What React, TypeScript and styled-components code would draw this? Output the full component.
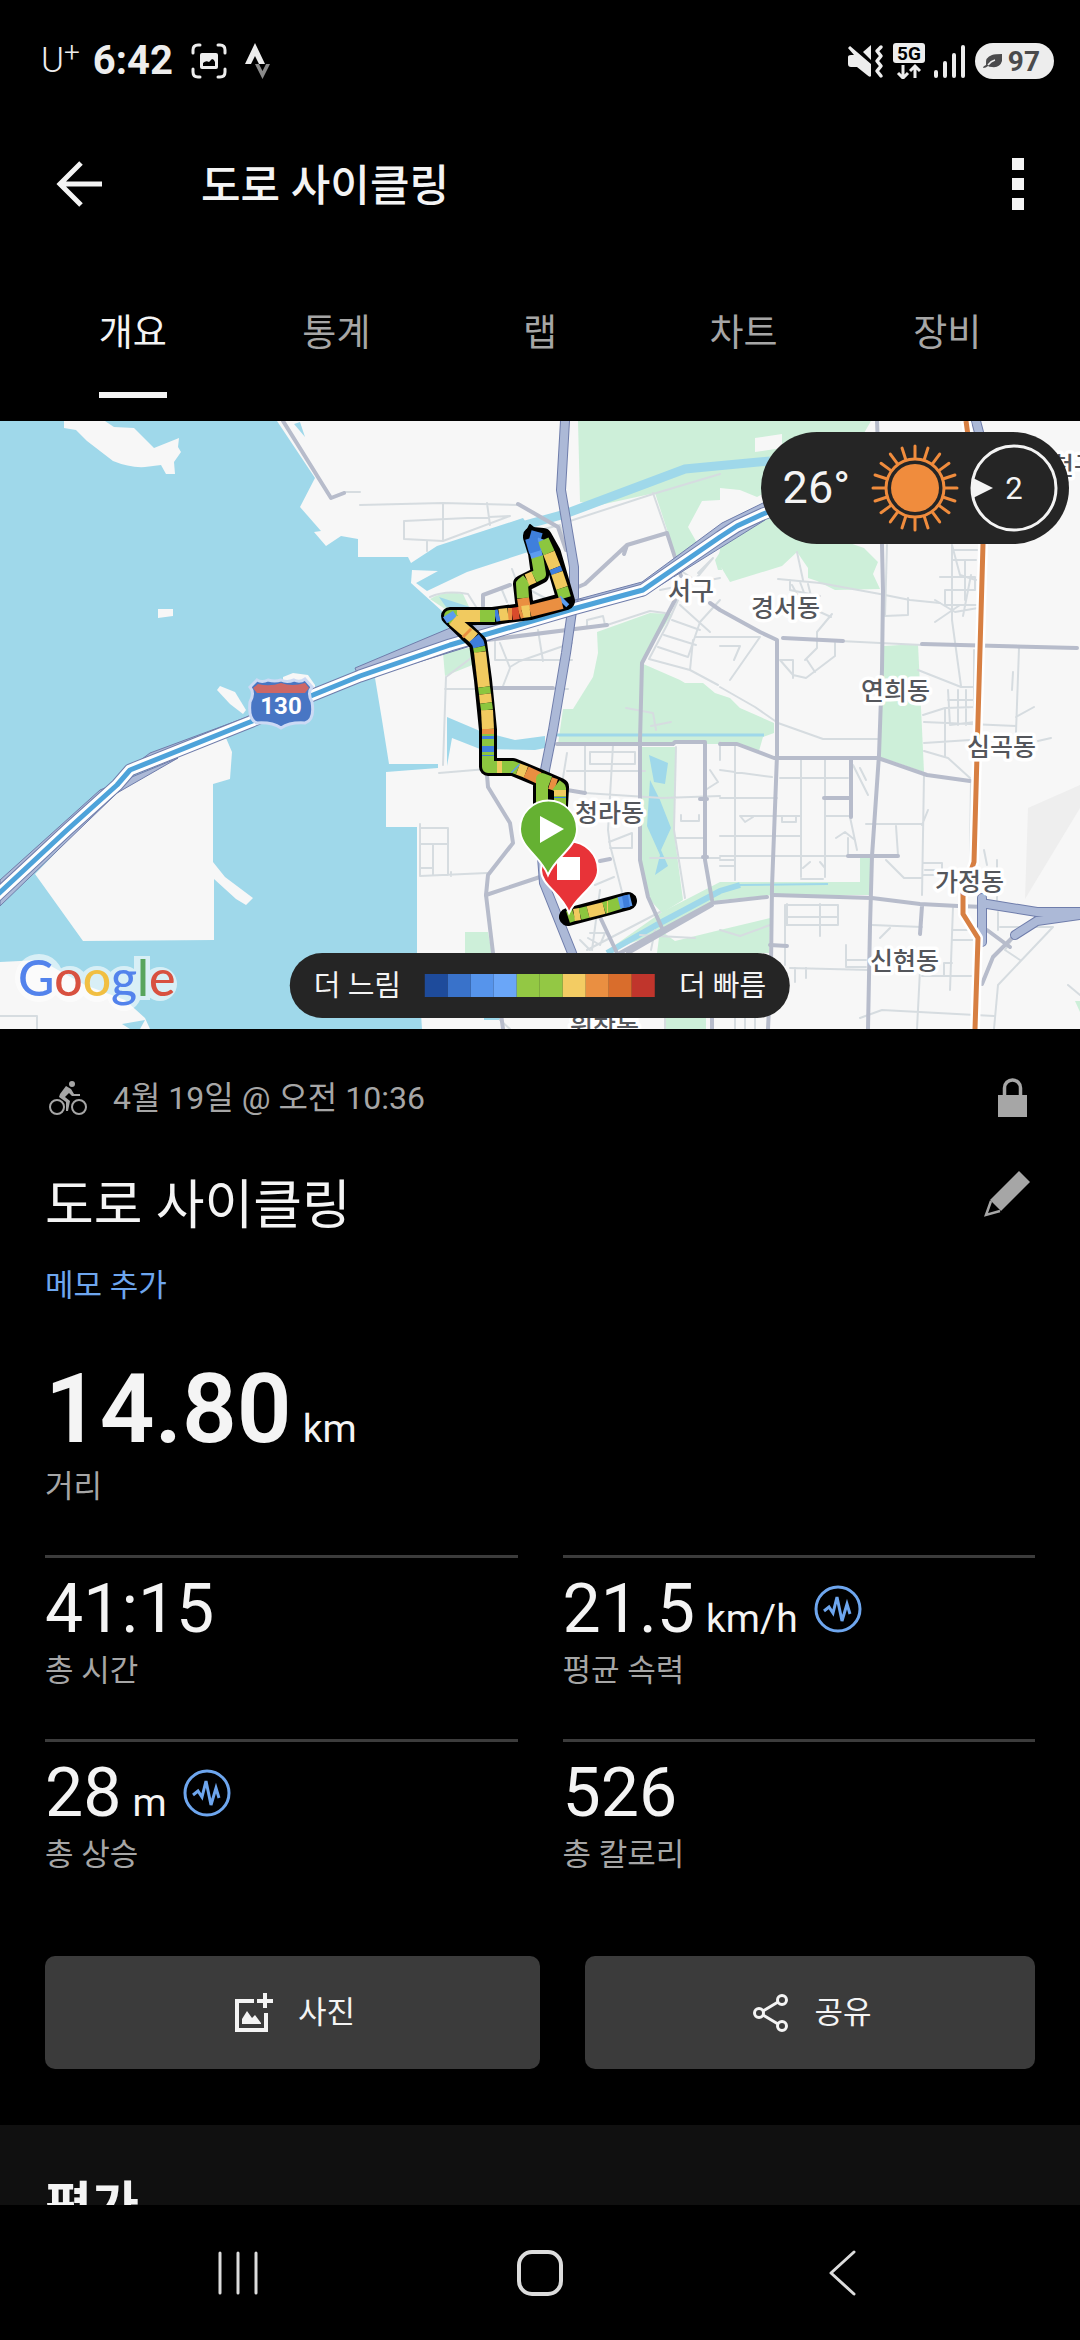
import * as React from "react";
import styled, { createGlobalStyle } from "styled-components";

const colour = {
  black: "#000000",
  panel: "#101010",
  overlay: "#252525",
  button: "#3b3b3b",
  divider: "#3c3c3c",
  text: "#f4f4f4",
  muted: "#a6a6a6",
  link: "#6ea6ee",
  land: "#f7f7f7",
  water: "#9fd8ea",
  park: "#cdefd9",
  minorRoad: "#d6dce0",
  road: "#b7bccb",
  highway: "#acb9d7",
  highwayEdge: "#6f7dab",
};

const GlobalStyle = createGlobalStyle`
  * {
    box-sizing: border-box;
  }

  body {
    margin: 0;
    background: ${colour.black};
    color: ${colour.text};
    font-family: Roboto, "Noto Sans CJK KR", sans-serif;
  }

  button {
    border: 0;
    padding: 0;
    background: none;
    color: inherit;
    font: inherit;
  }

  svg {
    display: block;
    flex: none;
  }
`;

const Page = styled.div`
  height: 100vh;
  display: flex;
  flex-direction: column;
`;

const StatusBar = styled.div`
  flex: none;
  height: 122px;
  padding: 0 26px 0 41px;
  display: flex;
  align-items: center;
  justify-content: space-between;
  color: #ededed;
`;

const StatusGroup = styled.div<{ $gap: number }>`
  display: flex;
  align-items: center;
  gap: ${(p) => p.$gap}px;
`;

const Carrier = styled.span`
  font-size: 35px;
  line-height: 40px;
  font-weight: 300;

  sup {
    font-size: 28px;
    line-height: 0;
    vertical-align: 10px;
  }
`;

const Clock = styled.span`
  margin-left: -5px;
  font-size: 40px;
  line-height: 40px;
  font-weight: 700;
`;

const Battery = styled.span`
  height: 36px;
  padding: 0 14px 0 8px;
  border-radius: 18px;
  display: flex;
  align-items: center;
  gap: 5px;
  background: #ededed;
  color: #4a4a4c;
  font-size: 28px;
  font-weight: 700;
`;

const Toolbar = styled.header`
  flex: none;
  height: 124px;
  padding: 0 54px;
  display: flex;
  align-items: center;
`;

const ToolbarTitle = styled.h1`
  flex: 1;
  margin: 0 0 0 97px;
  padding-top: 4px;
  font-size: 43px;
  line-height: 60px;
  font-weight: 500;
`;

const Tabs = styled.nav`
  flex: none;
  padding: 62px 31px 23px;
  display: flex;
`;

const TabSlot = styled.div`
  flex: 1;
  display: flex;
  justify-content: center;
`;

const Tab = styled.button<{ $active: boolean }>`
  padding-bottom: 32px;
  border-bottom: 6px solid ${(p) => (p.$active ? colour.text : "transparent")};
  color: ${(p) => (p.$active ? colour.text : colour.muted)};
  font-size: 37px;
  line-height: 52px;
`;

const Content = styled.main`
  flex: 1;
  min-height: 0;
  overflow-y: auto;
  scrollbar-width: none;
`;

const MapPanel = styled.section`
  position: relative;

  > svg {
    width: 100%;
    height: auto;
  }
`;

const WeatherBadge = styled.div`
  position: absolute;
  top: 11px;
  right: 11px;
  height: 112px;
  padding: 0 10px 0 22px;
  border-radius: 56px;
  display: flex;
  align-items: center;
  gap: 10px;
  background: ${colour.overlay};
`;

const Temperature = styled.span`
  margin-right: 11px;
  font-size: 45px;
  line-height: 56px;
`;

const Legend = styled.div`
  position: absolute;
  bottom: 11px;
  left: 50%;
  transform: translateX(-50%);
  height: 65px;
  padding: 0 24px;
  border-radius: 33px;
  display: flex;
  align-items: center;
  gap: 24px;
  background: ${colour.overlay};
  font-size: 29px;
  line-height: 44px;
  white-space: nowrap;
`;

const LegendScale = styled.div`
  display: flex;
`;

const LegendStep = styled.span<{ $colour: string }>`
  width: 23px;
  height: 23px;
  background: ${(p) => p.$colour};
`;

const Details = styled.section`
  padding: 43px 45px 56px;
`;

const MetaRow = styled.div`
  display: flex;
  align-items: center;
  height: 52px;
  color: ${colour.muted};
`;

const MetaDate = styled.span`
  flex: 1;
  margin-left: 23px;
  font-size: 32px;
  line-height: 52px;
`;

const TitleRow = styled.div`
  margin-top: 42px;
  display: flex;
  align-items: flex-start;
  justify-content: space-between;
`;

const ActivityTitle = styled.h2`
  margin: 0;
  font-size: 53px;
  line-height: 80px;
  font-weight: 400;
`;

const EditButton = styled.button`
  padding: 5px;
  color: ${colour.muted};
`;

const NoteLink = styled.a`
  margin-top: 18px;
  display: block;
  width: fit-content;
  color: ${colour.link};
  font-size: 31px;
  line-height: 44px;
  text-decoration: none;
`;

const Distance = styled.div`
  margin: 45px 0 46px;
`;

const DistanceValue = styled.div`
  font-size: 96px;
  line-height: 112px;
  font-weight: 600;
`;

const Unit = styled.span`
  margin-left: 11px;
  font-size: 39px;
  line-height: 40px;
  font-weight: 400;
`;

const Label = styled.div`
  color: ${colour.muted};
  font-size: 31px;
  line-height: 44px;
`;

const StatGrid = styled.div`
  display: grid;
  grid-template-columns: 1fr 1fr;
  gap: 46px 45px;
`;

const StatCell = styled.div`
  border-top: 3px solid ${colour.divider};
  padding-top: 11px;
`;

const StatRow = styled.div`
  height: 80px;
  display: flex;
  align-items: center;
  gap: 16px;
`;

const StatValue = styled.span`
  font-size: 68px;
  line-height: 80px;
`;

const ActionRow = styled.div`
  margin-top: 79px;
  display: grid;
  grid-template-columns: 11fr 10fr;
  gap: 45px;
`;

const ActionButton = styled.button`
  height: 113px;
  padding-left: 4px;
  border-radius: 10px;
  display: flex;
  align-items: center;
  justify-content: center;
  gap: 24px;
  background: ${colour.button};
  font-size: 31px;
  line-height: 44px;
`;

const RatingSection = styled.section`
  padding: 44px 45px 120px;
  background: ${colour.panel};
`;

const RatingTitle = styled.h2`
  margin: 0;
  font-size: 51px;
  line-height: 76px;
  font-weight: 700;
`;

const NavBar = styled.nav`
  flex: none;
  height: 135px;
  padding: 0 87px;
  display: flex;
  background: ${colour.black};
  color: #dcdcdc;
`;

const NavButton = styled.button`
  flex: 1;
  display: flex;
  align-items: center;
  justify-content: center;
`;

const MapLabel = styled.text`
  fill: #54565b;
  stroke: #ffffff;
  stroke-width: 7px;
  stroke-linejoin: round;
  paint-order: stroke;
  font-family: "Noto Sans CJK KR", sans-serif;
  font-size: 25px;
  font-weight: 500;
`;

const Logo = styled.text`
  font-family: Lato, sans-serif;
  font-size: 50px;
  font-weight: 500;
`;

const tabs = ["개요", "통계", "랩", "차트", "장비"];

const speedColours = [
  "#1e4b9b",
  "#3972ca",
  "#5694eb",
  "#6aa6f8",
  "#93c844",
  "#93c844",
  "#f3cc63",
  "#ea8f41",
  "#d96d2c",
  "#c0352c",
];

const stats = [
  { label: "총 시간", value: "41:15" },
  { label: "평균 속력", value: "21.5", unit: "km/h", chart: true },
  { label: "총 상승", value: "28", unit: "m", chart: true },
  { label: "총 칼로리", value: "526" },
];

const placeNames = [
  { name: "서구", x: 668, y: 600 },
  { name: "경서동", x: 751, y: 617 },
  { name: "연희동", x: 861, y: 700 },
  { name: "심곡동", x: 967, y: 756 },
  { name: "가정동", x: 935, y: 891 },
  { name: "신현동", x: 870, y: 970 },
  { name: "청라동", x: 575, y: 822 },
  { name: "원창동", x: 570, y: 1036 },
  { name: "천구", x: 1051, y: 475 },
];

const islands = [
  "M64 421V428L76 430 87 441 113 461Q130 468 145 467L161 465 166 474H175L174 462 181 452 178 447 179 438 154 448 134 428 114 427 105 421Z",
  "M158 609H173V616L158 618Z",
  "M220 686L235 692 246 710 243 714 230 704 217 690Z",
  "M283 677L293 673 308 675 315 685V690H283Z",
  "M35 874L83 941 214 940V879L236 899 246 905 253 898 225 877 213 862V784L230 779 232 752 226 738 190 748 117 790Z",
  "M0 962L40 960 85 985 125 1000 145 1018 150 1029H140L145 1020 122 1024 130 1029H0Z",
];

const parks = [
  "M578 421H871L860 440 757 497 740 490 720 488V500L702 501 688 527 700 548 676 557 655 493 600 505 580 502Z",
  "M723 530L760 512 864 548 878 562 873 574 880 589 835 590 817 581 808 578V568L797 552 782 566 730 582 718 562Z",
  "M597 632L650 613 672 614 641 663 680 680 685 683H703L715 693 730 698 740 708 774 723V733L763 737 759 751 737 744H558L563 709H573L593 677 598 653Z",
  "M642 747H675V840L683 900 662 913 650 900 641 862Z",
  "M608 950L662 912 720 882H860V858H871V895H773L720 900 640 940Z",
  "M657 953L660 930 675 941 720 930 770 918 769 953Z",
  "M665 1018H706V1029H665Z",
  "M883 646L918 644 924 772 880 757Z",
  "M465 932H488L492 953H465Z",
  "M443 653L473 647 480 662 445 676Z",
  "M430 599Q445 590 463 594L470 609 448 611Z",
  "M720 552L715 560 718 570 722 570Z",
  "M1075 1001H1080V1012Z",
];

const waters = [
  "M0 421H277L315 478 300 507 321 531 314 532 326 546 341 536 358 539V557H408L411 563 437 546 523 518 530 528 528 552 467 572 427 591 416 583 438 571 412 570 411 583 443 612 450 625 440 640 375 678 382 720 389 764H438V768L386 772V827H417V953L422 1029H0Z",
  "M300 422L305 437 294 424Z",
  "M447 717L480 731 515 740 545 736V748L535 750 480 749 452 738 447 766Z",
  "M439 597L470 607H446Z",
  "M649 755L668 763 665 784 654 782Z",
  "M650 780L660 800 671 828 661 850 668 866 655 875 660 855 647 826Z",
  "M484 1018H500V1020H484Z",
];

const minorRoads = [
  "M344 492H360M360 505L443 503 518 505M443 503V541L404 539V521L510 516 443 541M487 503L490 525M427 541V551",
  "M430 597Q445 590 468 594L478 610M512 569L518 585M502 590L507 602M530 590L545 598",
  "M570 521L653 494 720 474M653 493L675 556M540 530L560 525 567 545",
  "M443 765L446 677 475 655M439 773L487 769M445 689H568M500 643L510 668 503 686M495 640V660H572M510 667L520 661 572 643M538 630L543 661",
  "M587 628V620L603 616 605 625M607 625L650 611 665 613M656 730L653 713 626 708M651 726L671 722",
  "M678 600L667 625 649 659 690 670 718 685M658 647L688 657 700 622 720 600M664 635L696 645M672 620L700 630M680 605L710 632M695 637H720M690 670L693 640M672 565L695 580 713 558 698 573M660 590L720 578",
  "M420 824V876L487 873M420 828H448V875M420 844H448M433 845V875M420 868H433M451 872V876",
  "M567 753L561 790M585 745V792M613 745L608 830 610 845 622 892M590 752H635V764H590ZM567 771H645M585 793L662 798 720 796M609 842L632 833V848H610M595 885L614 877M720 742V760M676 747L674 830 685 898M676 838H705M681 815V821H699V815M650 858H720M710 770L718 782 707 789M600 917L615 905M580 940L590 950M590 933H605L600 945 588 938M587 950L660 912M640 935L695 938M651 950L655 930M600 890L592 950",
  "M720 637H760L730 680M720 646H740L734 660M720 687L755 707 778 723 823 739H880M720 770L772 777M720 798H777M720 836H801M720 856H848M735 744V880M740 816H800M741 817L745 822 753 817M782 816V822H796V816M801 760V877M825 760V877M801 879H823M825 816H850M848 838V855M850 817L857 850M836 838L845 832 855 840M780 778H848M720 866H735M803 868L810 862M820 862L825 868",
  "M797 552L803 580M778 579L820 583 880 594 910 600 940 603M790 580V590L820 596M792 585L800 600M800 582L806 598M808 584L812 600M832 614L817 632V648L805 660M780 660L793 675 806 678 835 656V643M793 660V678M780 660H793M807 660L815 672M840 641L880 643 922 645M820 612L831 617",
  "M887 545L885 616 908 615V598M952 545L960 575 976 580M940 577H975V590H945V605H976M935 600L955 612 978 608M952 545V620L961 686M935 622L960 605M965 560V600M971 575L963 616M953 550H978M953 560H976M1019 648L1016 732M1013 672L1012 690M974 650V750M918 670L961 687H974M923 715L945 708 975 707M945 708V757M924 743L970 740M924 722L1016 726M948 690L950 725 975 722M948 700H975M958 690V725M966 690V725M924 751L948 758 970 778M1016 717L1034 707M1016 743H1034M1038 741L1051 738",
  "M853 765L868 795M866 780L860 768M924 775L922 895M866 824H922M896 826L898 855M886 860L904 878H922M928 810L922 825M924 863H942V875H924M925 870H935M971 780L970 860M984 850L987 865M997 860V900",
  "M785 905H838V925H785M787 904V925M820 904V936M787 917H838M785 905V965M795 968V982M806 968V978M846 945V967H866M846 960H866M790 968L870 970M880 938L890 928M872 925L922 927M953 907L950 990M952 930H975M952 940H975M922 976H975M944 976V963H952M860 1018L882 1010 994 1016M920 970L917 1029M994 1029L998 985 1053 927H1000M998 912V930M1015 935L1005 950 1020 960M1068 985L1080 995",
  "M0 1016H37V1029M500 1020L510 1029M665 1018V1029M735 1018V1029M745 1018V1029M755 1018V1029M720 860H735M720 930L740 936 770 925",
];

const roads = [
  "M283 421L331 498 344 493",
  "M518 504L558 527 566 550",
  "M578 587L585 584 627 545 667 533 681 576M627 545L624 554",
  "M675 600L642 663 640 740 640 860 648 897 662 928",
  "M483 606V595L510 585",
  "M487 640L607 625M493 688H553",
  "M557 744H673L675 742H705V860L712 900",
  "M720 744H737L774 758H878L927 775 970 781",
  "M487 775L488 787 510 823 513 843 488 875 486 895 493 953 503 1029",
  "M486 895L540 877M567 790L585 793M600 861L610 859M700 799H707M703 857H707",
  "M600 917L617 953M620 953L662 930 712 903 767 897M628 953L668 930 712 905",
  "M877 421L882 545 883 591 882 669 879 755 872 856 870 926 868 1029",
  "M710 603L720 610 760 632 777 640V755L772 887 771 965 768 1029",
  "M783 638L843 641M922 644L1077 648",
  "M773 895L872 898 920 904 958 906 985 907M922 906L920 934",
  "M851 758V817M824 798H850M848 856H898M770 945L787 946",
  "M987 930L1010 947M1015 935L993 957 982 984",
  "M712 1018V1029",
];

const highways = [
  "M565 421L561 490 574 567V597L566 653 553 730 545 770 540 830 544 883 572 953 598 1029",
  "M976 421L981 440M982 898V942",
  "M987 904L1037 912H1080M1015 935L1037 921 1080 915",
];

const expressway =
  "M-6 898L67 830 117 785 130 770 250 722 313 695 360 676 450 645 573 609 643 590 720 537 737 526 763 514 800 500";

const tollRoad =
  "M966 421L983 544 977 755 974 862 963 893V914L978 938 975 1029";

const blue = "#3f7fdc";
const sky = "#5c9cf0";
const green = "#8cc63f";
const yellow = "#f1ca5f";
const orange = "#ea8f41";
const red = "#d94a2b";

const trackOutline =
  "M532 536L543 537 552 553 566 601 530 611 493 616 450 616 478 643 483 680 488 730V767L513 767 537 777 560 787 559 806M542 780V806M525 611L522 584 540 575 537 553 532 537M568 917L628 901";

const trackParts: [string, string][] = [
  ["M530 536L541 539", blue],
  ["M536 543L544 546", sky],
  ["M543 540L549 553", green],
  ["M549 553L555 568", yellow],
  ["M555 568L557 573", blue],
  ["M557 573L562 588", yellow],
  ["M562 588L565 598", green],
  ["M525 610L523 598", orange],
  ["M523 598L522 584 527 580", green],
  ["M527 580L534 577", yellow],
  ["M534 577L540 574 537 556", green],
  ["M537 557L535 550", sky],
  ["M535 552L531 538", blue],
  ["M565 600L562 603", sky],
  ["M562 603L530 611", orange],
  ["M530 611L522 612", yellow],
  ["M522 612L519 613", orange],
  ["M519 613L512 614", red],
  ["M512 614L508 614", orange],
  ["M508 614L499 615", yellow],
  ["M499 615L495 616", blue],
  ["M495 616L480 616", green],
  ["M480 616L455 616", yellow],
  ["M457 616L450 616 454 620", green],
  ["M448 614L452 620", sky],
  ["M453 620L474 638", yellow],
  ["M466 632L468 634", orange],
  ["M474 638L478 643 479 647", blue],
  ["M479 647L480 652", green],
  ["M480 652L484 687", yellow],
  ["M484 687L485 694", green],
  ["M485 694L486 703", yellow],
  ["M486 703L487 710", green],
  ["M487 710L488 729", yellow],
  ["M488 729V734", orange],
  ["M488 734V767L497 767", green],
  ["M488 736V739", blue],
  ["M488 746V752", blue],
  ["M488 755V756", blue],
  ["M497 767L502 767", yellow],
  ["M502 767L513 767 518 769", green],
  ["M515 768L516 769", sky],
  ["M518 769L526 772", yellow],
  ["M526 772L539 778", orange],
  ["M542 806V779L550 782", green],
  ["M550 783L556 785", orange],
  ["M556 785L560 788V806", green],
  ["M560 790V796", yellow],
  ["M560 797V798", blue],
  ["M568 917L574 915", green],
  ["M574 915L580 914", yellow],
  ["M580 914L588 912", green],
  ["M588 912L604 908", yellow],
  ["M604 908L620 903", green],
  ["M607 907L608 907", yellow],
  ["M619 903L631 900", sky],
  ["M623 902L629 901", blue],
];

const TrackMap: React.FC = () => (
  <svg viewBox="0 421 1080 608" role="img" aria-label="경로 지도">
    <rect y="421" width="1080" height="608" fill={colour.land} />
    <path d="M1028 808L1080 785V808L1025 899Z" fill="#eeeeee" />

    <g fill={colour.park}>
      {parks.map((d) => (
        <path key={d} d={d} />
      ))}
    </g>
    <g fill={colour.water}>
      {waters.map((d) => (
        <path key={d} d={d} />
      ))}
    </g>
    <g fill={colour.land}>
      {islands.map((d) => (
        <path key={d} d={d} />
      ))}
      <path d="M755 438L782 434V448L755 452Z" />
    </g>
    <g fill="none" stroke={colour.water}>
      <path d="M525 525L565 514 685 469 770 461" strokeWidth="9" />
      <path d="M557 735H764" strokeWidth="3" />
      <path d="M607 953L662 922 720 891 740 885" strokeWidth="6" />
      <path d="M738 885L828 884" strokeWidth="2" />
    </g>

    <g fill="none" strokeLinejoin="round" strokeLinecap="round">
      <g stroke={colour.minorRoad} strokeWidth="2">
        {minorRoads.map((d) => (
          <path key={d} d={d} />
        ))}
      </g>
      <g stroke={colour.road} strokeWidth="4">
        {roads.map((d) => (
          <path key={d} d={d} />
        ))}
      </g>
      {highways.map((d) => (
        <path key={d} d={d} stroke={colour.highwayEdge} strokeWidth="10" />
      ))}
      {highways.map((d) => (
        <path key={d} d={d} stroke={colour.highway} strokeWidth="8" />
      ))}
    </g>

    <g fill={colour.highway} stroke={colour.highwayEdge}>
      <path d="M0 906L117 793 178 758 100 790 0 880Z" />
      <path d="M138 762L150 753 250 716 250 726Z" />
      <path d="M355 668L450 628 475 625 560 608 490 640 360 680Z" />
      <path d="M575 600L642 582 722 523 765 502 765 520 643 596Z" />
    </g>
    <g fill="none" strokeLinejoin="round">
      <path d={expressway} stroke={colour.highwayEdge} strokeWidth="13" />
      <path d={expressway} stroke="#ffffff" strokeWidth="11" />
      <path d={expressway} stroke="#4ea3da" strokeWidth="5" />
      <path d={tollRoad} stroke="#ffffff" strokeWidth="10" />
      <path d={tollRoad} stroke="#d77f42" strokeWidth="5" />
    </g>

    <g>
      <path
        d="M257 680Q262 683 268 680 275 682 281 680 287 683 294 680 300 683 305 679L312 687Q307 693 312 702 315 720 305 723 290 722 281 728 272 722 257 723 248 720 250 702 255 693 250 687Z"
        fill="#4876c4"
        stroke="#ccdaf4"
        strokeWidth="3"
      />
      <path d="M258 684Q270 687 281 683 292 687 305 683L309 688 305 693H257L253 688Z" fill="#cd6766" />
      <text
        x="281"
        y="714"
        textAnchor="middle"
        fill="#ffffff"
        fontFamily="Roboto, sans-serif"
        fontSize="24"
        fontWeight="700"
      >
        130
      </text>
    </g>

    {placeNames.map((place) => (
      <MapLabel key={place.name} x={place.x} y={place.y}>
        {place.name}
      </MapLabel>
    ))}

    <g fill="none" strokeLinejoin="round">
      <path d={trackOutline} stroke="#000000" strokeWidth="18" strokeLinecap="round" />
      <path d="M524 537L530 525 541 534Z" fill="#000000" stroke="#000000" strokeWidth="2" />
      {trackParts.map(([d, stroke]) => (
        <path key={d} d={d} stroke={stroke} strokeWidth="12" />
      ))}
    </g>

    <g stroke="#ffffff" strokeWidth="2">
      <path d="M569 913C562 893 541 886 541 870A28 28 0 0 1 598 870C598 886 576 896 569 913Z" fill="#e83338" />
      <rect x="557" y="857" width="23" height="23" fill="#ffffff" stroke="none" />
      <path d="M548 875C541 856 520 848 520 829A28 28 0 0 1 577 829C577 848 556 856 548 875Z" fill="#65b132" />
      <path d="M540 816L564 829 540 843Z" fill="#ffffff" stroke="none" />
    </g>

    <g fill="#ffffff" opacity="0.6">
      <circle cx="39" cy="978" r="24" />
      <circle cx="70" cy="984" r="18" />
      <circle cx="97" cy="984" r="18" />
      <circle cx="124" cy="984" r="18" />
      <circle cx="124" cy="994" r="17" />
      <rect x="134" y="956" width="16" height="44" />
      <circle cx="160" cy="984" r="17" />
    </g>
    <Logo x="18" y="996">
      <tspan fill="#5383ec">G</tspan>
      <tspan fill="#d85140">o</tspan>
      <tspan fill="#f1bf42">o</tspan>
      <tspan fill="#5383ec">g</tspan>
      <tspan fill="#58a55c">l</tspan>
      <tspan fill="#d85140">e</tspan>
    </Logo>
  </svg>
);

const SunIcon: React.FC = () => (
  <svg width="88" height="88" viewBox="-44 -44 88 88" fill="none" stroke="#f08c3d" strokeWidth="3">
    <circle r="24" fill="#f08c3d" stroke="none" />
    <circle r="29" />
    {Array.from({ length: 20 }, (_, i) => (
      <path key={i} d="M0 -30V-42" strokeLinecap="round" transform={`rotate(${i * 18})`} />
    ))}
  </svg>
);

const WindIcon: React.FC = () => (
  <svg width="90" height="90" viewBox="0 0 90 90">
    <circle cx="45" cy="45" r="42" fill="none" stroke={colour.text} strokeWidth="3" />
    <path d="M4 35L24 45 4 55Z" fill={colour.text} />
    <text x="45" y="56" textAnchor="middle" fill={colour.text} fontSize="31">
      2
    </text>
  </svg>
);

const PulseIcon: React.FC = () => (
  <svg width="48" height="48" viewBox="0 0 48 48" fill="none" stroke={colour.link} strokeWidth="3">
    <circle cx="24" cy="24" r="22" />
    <path d="M10 26L15 22 19 28 23 12 28 36 33 19 36 29" />
  </svg>
);

const App: React.FC = () => (
  <>
    <GlobalStyle />
    <Page>
      <StatusBar>
        <StatusGroup $gap={18}>
          <Carrier>
            U<sup>+</sup>
          </Carrier>
          <Clock>6:42</Clock>
          <svg width="36" height="36" viewBox="0 0 36 36" fill="none" stroke="currentColor" strokeWidth="3" strokeLinecap="round">
            <path d="M2 10V7Q2 2 7 2H9M27 2H29Q34 2 34 7V10M34 26V29Q34 34 29 34H27M9 34H7Q2 34 2 29V26" />
            <rect x="9" y="10" width="18" height="16" rx="2" fill="currentColor" stroke="none" />
            <path d="M12 23V20Q15 17 18 19L21 16Q23 16 24 19V23Z" fill="#000000" stroke="none" />
          </svg>
          <svg width="26" height="36" viewBox="0 0 26 36">
            <path d="M10 0L20 21H14L10 13 6 21H0Z" fill="currentColor" />
            <path d="M10 21H14L17.500 28 21 21H25L17.500 36Z" fill="#8a8a8a" />
          </svg>
        </StatusGroup>
        <StatusGroup $gap={9}>
          <svg width="38" height="36" viewBox="0 0 38 36" fill="currentColor">
            <path d="M2 14Q2 12 5 12H8L2 5 4 3 25 21V33Q24 35 21 32L11 24H5Q2 24 2 21Z" />
            <path d="M17 9L25 2V17Z" />
            <path
              d="M35 4L31 8 35 13 31 18 35 23 31 28 35 33"
              fill="none"
              stroke="currentColor"
              strokeWidth="3.500"
              strokeLinecap="round"
              strokeLinejoin="round"
            />
          </svg>
          <svg width="32" height="36" viewBox="0 0 32 36">
            <rect width="32" height="20" rx="3" fill="currentColor" />
            <text x="16" y="17" textAnchor="middle" fill="#000000" fontSize="19" fontWeight="700">
              5G
            </text>
            <path
              d="M10 22V34M5 30L10 35 15 30M22 35V23M17 28L22 23 27 28"
              fill="none"
              stroke="currentColor"
              strokeWidth="3"
            />
          </svg>
          <svg width="32" height="36" viewBox="0 0 32 36" stroke="currentColor" strokeWidth="4" strokeLinecap="round">
            <path d="M2 29V33M11 20V33M20 12V33M29 4V33" />
          </svg>
          <Battery>
            <svg width="20" height="16" viewBox="0 0 20 16" fill="currentColor">
              <path d="M19 1V8Q17 15 9 14 6 14 5 13 3 15 0 15 0 13 3 12 2 4 9 2 12 1 19 1Z" />
              <path d="M5 12Q8 8 12 7" fill="none" stroke="#ededed" strokeWidth="1.500" />
            </svg>
            97
          </Battery>
        </StatusGroup>
      </StatusBar>

      <Toolbar>
        <button type="button" aria-label="뒤로">
          <svg width="50" height="48" viewBox="0 0 50 48" fill="none" stroke={colour.text} strokeWidth="5">
            <path d="M48 24H8M27 3L6 24 27 45" />
          </svg>
        </button>
        <ToolbarTitle>도로 사이클링</ToolbarTitle>
        <button type="button" aria-label="메뉴">
          <svg width="16" height="52" viewBox="0 0 16 52" fill={colour.text}>
            <path d="M2 0H14V12H2ZM2 20H14V32H2ZM2 40H14V52H2Z" />
          </svg>
        </button>
      </Toolbar>

      <Tabs>
        {tabs.map((tab, index) => (
          <TabSlot key={tab}>
            <Tab type="button" $active={index === 0}>
              {tab}
            </Tab>
          </TabSlot>
        ))}
      </Tabs>

      <Content>
        <MapPanel>
          <TrackMap />
          <WeatherBadge>
            <Temperature>26°</Temperature>
            <SunIcon />
            <WindIcon />
          </WeatherBadge>
          <Legend>
            더 느림
            <LegendScale>
              {speedColours.map((step, index) => (
                <LegendStep key={index} $colour={step} />
              ))}
            </LegendScale>
            더 빠름
          </Legend>
        </MapPanel>

        <Details>
          <MetaRow>
            <svg width="45" height="36" viewBox="0 0 45 36" fill="none" stroke="currentColor" strokeWidth="2">
              <circle cx="12" cy="27" r="7" />
              <circle cx="34" cy="27" r="7" />
              <circle cx="27" cy="4" r="3" fill="currentColor" stroke="none" />
              <path
                d="M21 6L26 9 29 14H35V16H27L24 13 20 17 25 21 23 31H21L21 22 14 17 15 14Z"
                fill="currentColor"
                stroke="none"
              />
            </svg>
            <MetaDate>4월 19일 @ 오전 10:36</MetaDate>
            <svg width="45" height="40" viewBox="0 0 45 40">
              <rect x="8" y="17" width="29" height="22" fill="currentColor" />
              <path d="M14.500 18V10A8 8 0 0 1 30.500 10V18" fill="none" stroke="currentColor" strokeWidth="3.500" />
            </svg>
          </MetaRow>
          <TitleRow>
            <ActivityTitle>도로 사이클링</ActivityTitle>
            <EditButton type="button" aria-label="편집">
              <svg width="46" height="46" viewBox="0 0 46 46">
                <path d="M35 0L46 11 17 40 6 29Z" fill="currentColor" />
                <path d="M7 30L2 44 16 40" fill="none" stroke="currentColor" strokeWidth="2.500" />
              </svg>
            </EditButton>
          </TitleRow>
          <NoteLink href="#note">메모 추가</NoteLink>

          <Distance>
            <DistanceValue>
              14.80<Unit>km</Unit>
            </DistanceValue>
            <Label>거리</Label>
          </Distance>

          <StatGrid>
            {stats.map((stat) => (
              <StatCell key={stat.label}>
                <StatRow>
                  <StatValue>
                    {stat.value}
                    {stat.unit && <Unit>{stat.unit}</Unit>}
                  </StatValue>
                  {stat.chart && (
                    <button type="button" aria-label={`${stat.label} 차트`}>
                      <PulseIcon />
                    </button>
                  )}
                </StatRow>
                <Label>{stat.label}</Label>
              </StatCell>
            ))}
          </StatGrid>

          <ActionRow>
            <ActionButton type="button">
              <svg width="40" height="40" viewBox="0 0 40 40" fill="none" stroke="currentColor" strokeWidth="4">
                <path d="M20 8H3V37H32V20" />
                <path d="M31 0V15M23 8H39" />
                <path d="M8 30V26L13 18 18 25 21 22 27 30V31H8Z" fill="currentColor" stroke="none" />
              </svg>
              사진
            </ActionButton>
            <ActionButton type="button">
              <svg width="38" height="40" viewBox="0 0 38 40" fill="none" stroke="currentColor" strokeWidth="3">
                <circle cx="7" cy="20" r="4.500" />
                <circle cx="30" cy="7" r="4.500" />
                <circle cx="30" cy="33" r="4.500" />
                <path d="M11 18L26 9M11 22L26 31" />
              </svg>
              공유
            </ActionButton>
          </ActionRow>
        </Details>

        <RatingSection>
          <RatingTitle>평가</RatingTitle>
        </RatingSection>
      </Content>

      <NavBar>
        <NavButton type="button" aria-label="최근 앱">
          <svg width="42" height="44" viewBox="0 0 42 44" stroke="currentColor" strokeWidth="3" strokeLinecap="round">
            <path d="M3 2V42M21 2V42M39 2V42" />
          </svg>
        </NavButton>
        <NavButton type="button" aria-label="홈">
          <svg width="46" height="46" viewBox="0 0 46 46" fill="none" stroke="currentColor" strokeWidth="4">
            <rect x="2" y="2" width="42" height="42" rx="13" />
          </svg>
        </NavButton>
        <NavButton type="button" aria-label="뒤로 가기">
          <svg width="30" height="48" viewBox="0 0 30 48" fill="none" stroke="currentColor" strokeWidth="3">
            <path d="M27 3L4 24 27 45" strokeLinecap="round" strokeLinejoin="round" />
          </svg>
        </NavButton>
      </NavBar>
    </Page>
  </>
);

export default App;
